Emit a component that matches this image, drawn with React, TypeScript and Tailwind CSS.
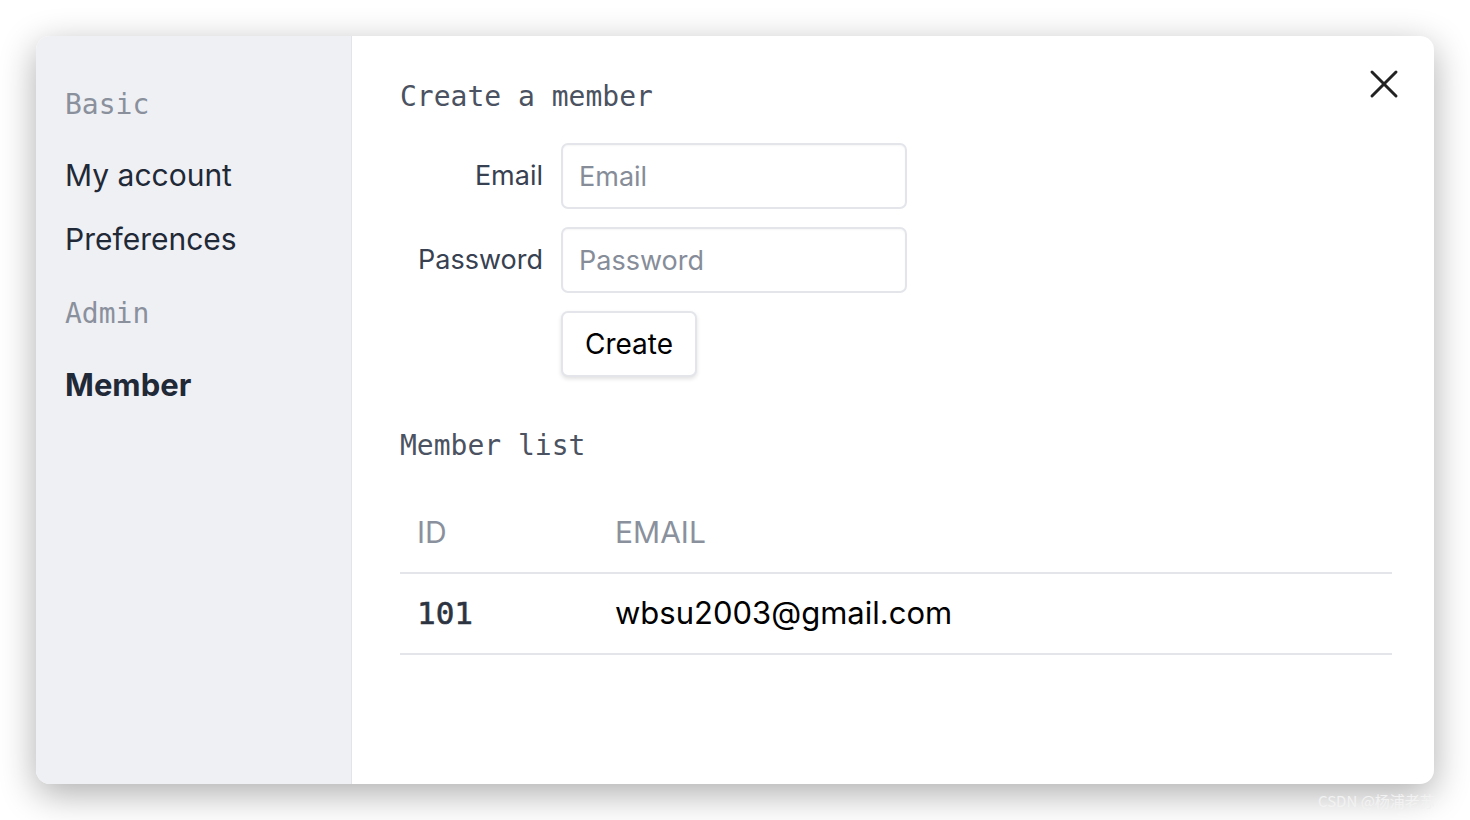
import { X } from 'lucide-react';

const mono = "font-['DejaVu_Sans_Mono','Liberation_Mono',monospace]";
const sans = "font-['Inter','Noto_Sans',sans-serif]";

export default function App() {
  const members = [{ id: 101, email: 'wbsu2003@gmail.com' }];

  return (
    <div className={`relative w-[1470px] h-[820px] bg-white p-[36px] overflow-hidden ${sans}`}>
      <div className="flex h-[748px] rounded-[14px] bg-white shadow-[0_10px_36px_rgba(0,0,0,0.32)] overflow-hidden">
        {/* Sidebar */}
        <aside className="w-[316px] shrink-0 bg-[#eff0f4] border-r border-[#e2e4e9] pl-[29px] pt-[49px]">
          <div className={`${mono} text-[28px] leading-[40px] text-[#8a919d]`}>Basic</div>
          <div className="mt-[30px] text-[30px] leading-[40px] text-[#1f2937]">My account</div>
          <div className="mt-[24px] text-[30px] leading-[40px] text-[#1f2937]">Preferences</div>
          <div className={`${mono} mt-[35px] text-[28px] leading-[40px] text-[#8a919d]`}>Admin</div>
          <div className="mt-[31px] text-[31px] leading-[40px] font-bold text-[#1f2937]">Member</div>
        </aside>

        {/* Content */}
        <main className="relative flex-1 pl-[48px] pr-[42px] pt-[41px]">
          <button className="absolute top-[24px] right-[26px] text-[#222]">
            <X size={48} strokeWidth={1.5} />
          </button>

          <h2 className={`${mono} text-[28px] leading-[40px] text-[#4b5261]`}>Create a member</h2>

          <div className="mt-[26px] flex flex-col gap-[18px]">
            <div className="flex items-center gap-[18px]">
              <label className="w-[143px] text-right text-[27px] text-[#374151]">Email</label>
              <input
                placeholder="Email"
                className="w-[346px] h-[66px] rounded-[7px] border-2 border-[#e3e5ea] px-[16px] text-[27px] placeholder:text-[#868d99] shadow-[inset_0_1px_2px_rgba(0,0,0,0.04)]"
              />
            </div>
            <div className="flex items-center gap-[18px]">
              <label className="w-[143px] text-right text-[27px] text-[#374151]">Password</label>
              <input
                type="password"
                placeholder="Password"
                className="w-[346px] h-[66px] rounded-[7px] border-2 border-[#e3e5ea] px-[16px] text-[27px] placeholder:text-[#868d99] shadow-[inset_0_1px_2px_rgba(0,0,0,0.04)]"
              />
            </div>
            <div className="flex items-center gap-[18px]">
              <div className="w-[143px]" />
              <button className="w-[136px] h-[66px] rounded-[7px] border-2 border-[#e3e5ea] bg-white text-[28px] text-black shadow-[0_2px_4px_rgba(0,0,0,0.12)]">
                Create
              </button>
            </div>
          </div>

          <h2 className={`${mono} mt-[49px] text-[28px] leading-[40px] text-[#4b5261]`}>Member list</h2>

          <table className="mt-[27px] w-full border-collapse">
            <thead>
              <tr className="h-[80px] border-b-2 border-[#e3e5ea]">
                <th className="w-[215px] pl-[17px] text-left font-normal text-[30px] text-[#8a919d]">ID</th>
                <th className="text-left font-normal text-[30px] text-[#8a919d]">EMAIL</th>
              </tr>
            </thead>
            <tbody>
              {members.map((m) => (
                <tr key={m.id} className="h-[81px] border-b-2 border-[#e3e5ea]">
                  <td className={`${mono} pl-[17px] text-[31px] text-[#2d3441] [-webkit-text-stroke:0.6px_#2d3441]`}>{m.id}</td>
                  <td className="text-[31px] text-black">{m.email}</td>
                </tr>
              ))}
            </tbody>
          </table>
        </main>
      </div>

      <div className="absolute left-[1318px] top-[790px] text-[15px] text-[#f2f2f2] whitespace-nowrap font-['Noto_Sans_CJK_SC',sans-serif]">
        CSDN @杨浦老苏
      </div>
    </div>
  );
}
